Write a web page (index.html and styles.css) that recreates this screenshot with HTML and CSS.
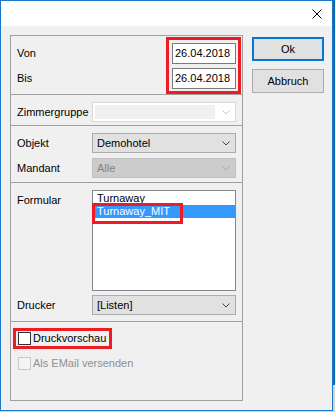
FILE: index.html
```html
<!DOCTYPE html>
<html lang="de">
<head>
	<meta charset="UTF-8">
	<title>Druck</title>
	<link rel="stylesheet" href="styles.css">
</head>
<body>
	<div class="window">
		<div class="titlebar">
			<span class="close">
				<svg width="10" height="10" viewBox="0 0 10 10"><path d="M0.5 0.5 L9.5 9.5 M9.5 0.5 L0.5 9.5" stroke="#000" stroke-width="1" fill="none"/></svg>
			</span>
		</div>
		<div class="dialog">
			<div class="panel">
				<div class="section dates">
					<span class="label">Von</span><span class="date">26.04.2018</span>
					<span class="label">Bis</span><span class="date">26.04.2018</span>
				</div>
				<div class="section group">
					<span class="label">Zimmergruppe</span>
					<div class="combo combo-empty">
						<span class="combo-fill"></span>
						<svg class="chev" width="8" height="5" viewBox="0 0 8 5"><polyline points="0.5,0.5 4,4 7.5,0.5" fill="none" stroke="#c4c4c4"/></svg>
					</div>
				</div>
				<div class="section objekt">
					<span class="label">Objekt</span>
					<div class="combo">
						<span class="combo-text">Demohotel</span>
						<svg class="chev" width="8" height="5" viewBox="0 0 8 5"><polyline points="0.5,0.5 4,4 7.5,0.5" fill="none" stroke="#444"/></svg>
					</div>
					<span class="label">Mandant</span>
					<div class="combo combo-off">
						<span class="combo-text">Alle</span>
						<svg class="chev" width="8" height="5" viewBox="0 0 8 5"><polyline points="0.5,0.5 4,4 7.5,0.5" fill="none" stroke="#a8a8a8"/></svg>
					</div>
				</div>
				<div class="section formular">
					<span class="label label-top">Formular</span>
					<div class="list">
						<div class="item">Turnaway</div>
						<div class="item selected">Turnaway_MIT</div>
					</div>
					<span class="label">Drucker</span>
					<div class="combo">
						<span class="combo-text">[Listen]</span>
						<svg class="chev" width="8" height="5" viewBox="0 0 8 5"><polyline points="0.5,0.5 4,4 7.5,0.5" fill="none" stroke="#444"/></svg>
					</div>
				</div>
				<div class="section options">
					<div class="check"><span class="box"></span>Druckvorschau</div>
					<div class="check check-off"><span class="box"></span>Als EMail versenden</div>
				</div>

				<span class="mark mark-dates"></span>
				<span class="mark mark-item"></span>
				<span class="mark mark-check"></span>
			</div>
			<div class="buttons">
				<div class="btn btn-default">Ok</div>
				<div class="btn">Abbruch</div>
			</div>
		</div>
	</div>
</body>
</html>
```

FILE: styles.css
```css
html, body {
	margin: 0;
	padding: 0;
}
body {
	width: 335px;
	height: 412px;
	overflow: hidden;
	background: linear-gradient(#0b6ab8, #0b6ab8) right top / 2px 385px no-repeat, #d4d4d4;
	font-family: "Liberation Sans", Arial, sans-serif;
	font-size: 11px;
	line-height: 13px;
	color: #000;
}
.window {
	width: 331px;
	height: 409px;
	border: 1px solid #1c78c9;
	background: #f0f0f0;
}
.titlebar {
	height: 25px;
	background: #fff;
	display: flex;
	justify-content: flex-end;
	align-items: flex-start;
}
.close {
	display: block;
	width: 10px;
	height: 10px;
	margin: 8px 10px 0 0;
}
.close svg {
	display: block;
}
.dialog {
	display: flex;
	padding: 9px 8px 9px 9px;
	gap: 9px;
}
.panel {
	position: relative;
	width: 231px;
	height: 364px;
	border: 1px solid #a0a0a0;
}
.section {
	box-sizing: border-box;
	border-top: 1px solid #a0a0a0;
	padding: 0 6px;
	display: grid;
	grid-template-columns: 75px 144px;
	align-items: center;
}
.section:first-child {
	border-top: 0;
}
.dates {
	height: 58px;
	padding-top: 7px;
	row-gap: 4px;
	align-content: start;
}
.group {
	height: 31px;
	padding-top: 7px;
	align-content: start;
}
.objekt {
	height: 57px;
	padding-top: 7px;
	row-gap: 5px;
	align-content: start;
}
.formular {
	height: 139px;
	padding-top: 7px;
	row-gap: 4px;
	align-content: start;
}
.options {
	height: 79px;
	padding: 10px 0 0 7px;
	display: flex;
	flex-direction: column;
	align-items: flex-start;
	gap: 12px;
}

.label {
	white-space: nowrap;
}
.label-top {
	align-self: start;
	margin-top: 4px;
}
.date {
	justify-self: end;
	box-sizing: border-box;
	width: 64px;
	height: 21px;
	border: 1px solid #7a7a7a;
	background: #fff;
	padding: 0 2px;
	display: flex;
	align-items: center;
}

.combo {
	box-sizing: border-box;
	height: 20px;
	border: 1px solid #adadad;
	background: #e1e1e1;
	display: flex;
	align-items: center;
	padding: 0 5px 0 4px;
}
.combo-text {
	flex: 1;
}
.chev {
	display: block;
	margin-top: 1px;
}
.combo-off {
	background: #cccccc;
	border-color: #bfbfbf;
	color: #838383;
}
.combo-empty {
	background: #fff;
	border-color: #d9d9d9;
	padding: 0 5px 0 2px;
}
.combo-fill {
	flex: 1;
	height: 14px;
	margin-right: 7px;
	background: #f0f0f0;
}

.list {
	box-sizing: border-box;
	height: 101px;
	border: 1px solid #828790;
	background: #fff;
	padding: 1px 0 0 2px;
}
.item {
	height: 13px;
	padding-left: 2px;
	white-space: nowrap;
}
.item.selected {
	background: #3399ff;
	color: #fff;
}

.check {
	display: flex;
	align-items: center;
	gap: 2px;
	height: 13px;
	white-space: nowrap;
}
.box {
	box-sizing: border-box;
	width: 13px;
	height: 13px;
	border: 1px solid #333;
	background: #fff;
}
.check-off {
	color: #8f8f8f;
}
.check-off .box {
	border-color: #c8c8c8;
	background: #f4f4f4;
}

.mark {
	position: absolute;
	box-sizing: border-box;
	border: 3px solid #ed1c24;
}
.mark-dates {
	left: 155px;
	top: 1px;
	width: 75px;
	height: 57px;
}
.mark-item {
	left: 81px;
	top: 167px;
	width: 91px;
	height: 21px;
}
.mark-check {
	left: 2px;
	top: 292px;
	width: 99px;
	height: 21px;
}

.buttons {
	display: flex;
	flex-direction: column;
	gap: 8px;
	padding-top: 2px;
}
.btn {
	box-sizing: border-box;
	width: 72px;
	height: 24px;
	border: 1px solid #adadad;
	background: #e1e1e1;
	display: flex;
	align-items: center;
	justify-content: center;
}
.btn-default {
	border: 2px solid #0078d7;
}
```
